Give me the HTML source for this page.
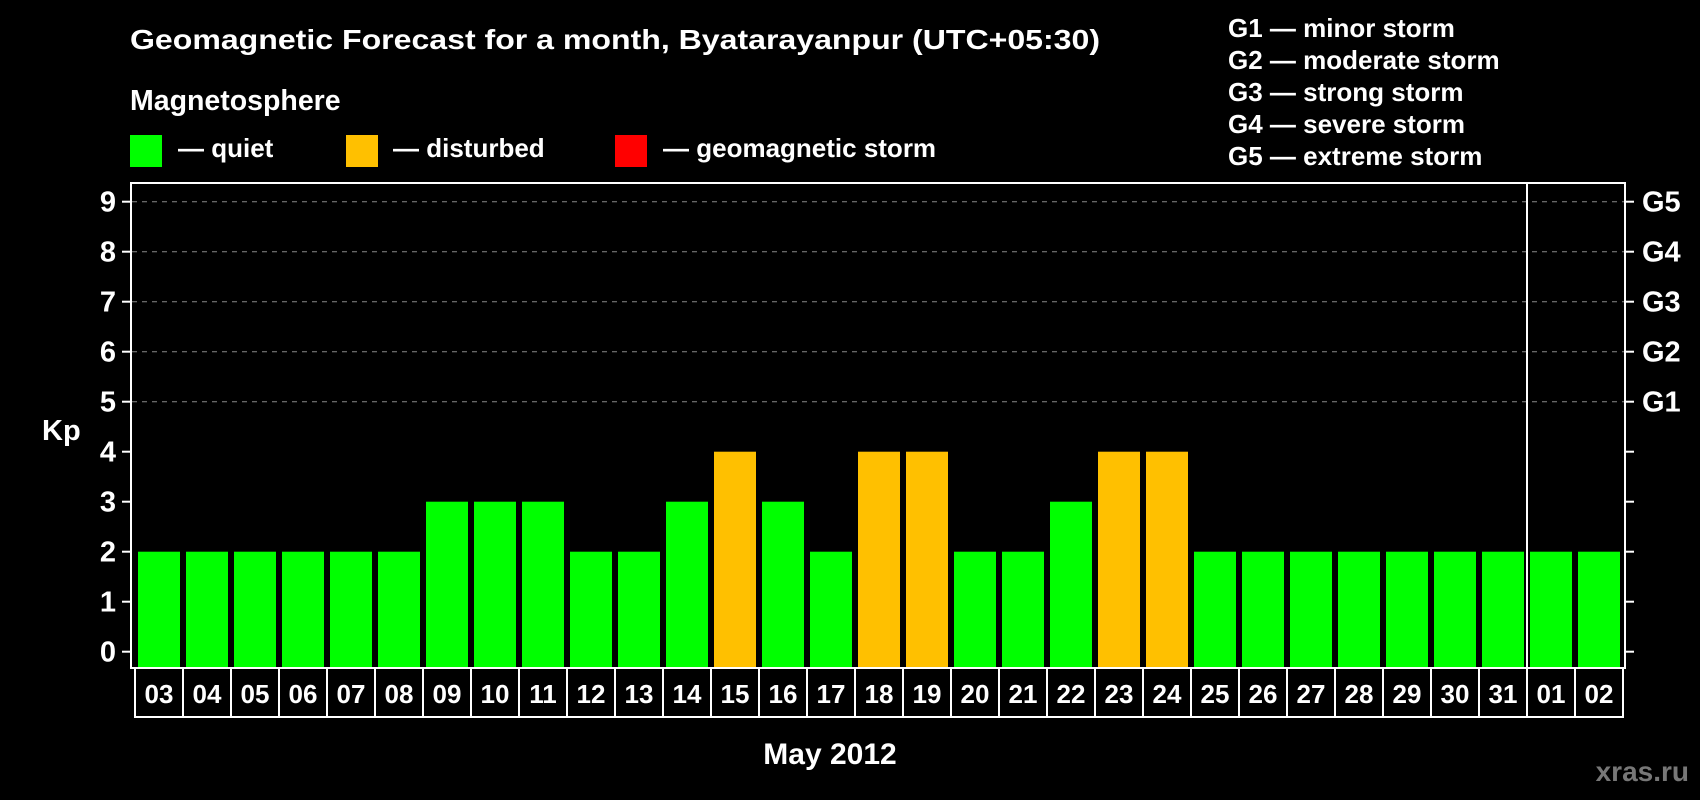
<!DOCTYPE html>
<html><head><meta charset="utf-8"><style>
html,body{margin:0;padding:0;background:#000;}
svg{display:block;font-family:"Liberation Sans",Arial,sans-serif;font-weight:bold;}
</style></head><body>
<svg width="1700" height="800" viewBox="0 0 1700 800" xmlns="http://www.w3.org/2000/svg">
<rect width="1700" height="800" fill="#000"/>
<g fill="#fff" font-size="26">
<text x="130" y="49" font-size="28" textLength="970" lengthAdjust="spacingAndGlyphs">Geomagnetic Forecast for a month, Byatarayanpur (UTC+05:30)</text>
<text x="130" y="110" font-size="28.5">Magnetosphere</text>
<text x="178" y="157">— quiet</text>
<text x="393" y="157">— disturbed</text>
<text x="663" y="157">— geomagnetic storm</text>
<text x="1228" y="37">G1 — minor storm</text>
<text x="1228" y="69">G2 — moderate storm</text>
<text x="1228" y="101">G3 — strong storm</text>
<text x="1228" y="133">G4 — severe storm</text>
<text x="1228" y="165">G5 — extreme storm</text>
</g>
<rect x="130" y="135" width="32" height="32" fill="#00ff00"/>
<rect x="346" y="135" width="32" height="32" fill="#ffc000"/>
<rect x="615" y="135" width="32" height="32" fill="#ff0000"/>
<g id="grid" stroke="#888" stroke-width="1" stroke-dasharray="5,5">
<line x1="132" x2="1624" y1="201.7" y2="201.7"/>
<line x1="132" x2="1624" y1="251.7" y2="251.7"/>
<line x1="132" x2="1624" y1="301.7" y2="301.7"/>
<line x1="132" x2="1624" y1="351.7" y2="351.7"/>
<line x1="132" x2="1624" y1="401.7" y2="401.7"/>
</g>
<g id="bars"></g>
<g fill="none" stroke="#fff" stroke-width="2">
<rect x="131" y="183" width="1494" height="485"/>
<line x1="1527" y1="183" x2="1527" y2="668"/>
</g>
<g id="ticks" stroke="#fff" stroke-width="2"></g>
<g id="ylab" fill="#fff" font-size="29"></g>
<g id="labs"></g>
<text x="42" y="440" fill="#fff" font-size="29">Kp</text>
<text x="830" y="764" fill="#fff" font-size="30" text-anchor="middle">May 2012</text>
<text x="1689" y="781" fill="#777" font-size="28" text-anchor="end">xras.ru</text>
</svg>
<script>
(function(){
var ns="http://www.w3.org/2000/svg";
function el(t,a,p,txt){var e=document.createElementNS(ns,t);for(var k in a)e.setAttribute(k,a[k]);if(txt!=null)e.textContent=txt;document.getElementById(p).appendChild(e);return e;}
var days=["03","04","05","06","07","08","09","10","11","12","13","14","15","16","17","18","19","20","21","22","23","24","25","26","27","28","29","30","31","01","02"];
var v=[2,2,2,2,2,2,3,3,3,2,2,3,4,3,2,4,4,2,2,3,4,4,2,2,2,2,2,2,2,2,2];
var org={12:1,15:1,16:1,20:1,21:1};
for(var i=0;i<31;i++){
 var x=135+i*48;
 var ty=651.7-50*v[i];
 el("rect",{x:x+3,y:ty,width:42,height:668-ty,fill:org[i]?"#ffc000":"#00ff00"},"bars");
 el("rect",{x:x,y:668,width:48,height:49,fill:"none",stroke:"#fff","stroke-width":2},"labs");
 el("text",{x:x+24,y:703,fill:"#fff","font-size":26,"text-anchor":"middle"},"labs",days[i]);
}
for(var k=0;k<=9;k++){
 var y=651.7-50*k;
 el("line",{x1:122,x2:131,y1:y,y2:y},"ticks");
 el("line",{x1:1625,x2:1634,y1:y,y2:y},"ticks");
 el("text",{x:116,y:y+10,"text-anchor":"end"},"ylab",""+k);
 if(k>=5) el("text",{x:1642,y:y+10},"ylab","G"+(k-4));
}
})();
</script>
</body></html>
